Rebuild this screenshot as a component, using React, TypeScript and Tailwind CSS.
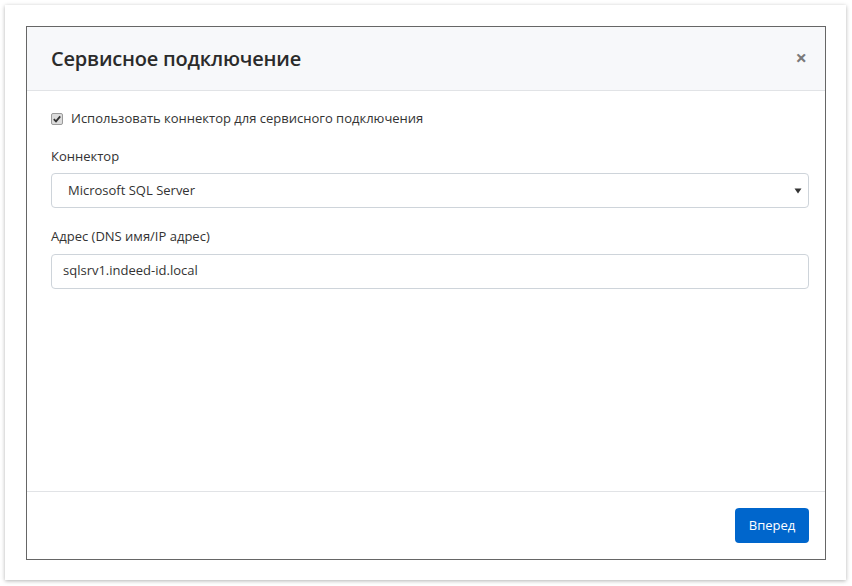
import React from 'react';

const font = { fontFamily: '"Open Sans", "Noto Sans", "Liberation Sans", sans-serif' };

export default function App() {
  return (
    <div className="w-[852px] h-[586px] bg-white pt-[5px] pl-[5px]" style={font}>
      <div className="w-[841px] h-[575px] bg-white shadow-[0_1px_4px_rgba(0,0,0,0.3)] pt-[21px] pl-[21px]">
        <div className="w-[800px] h-[534px] border border-[#666] flex flex-col text-[#212529]">
          <div className="h-[64px] bg-[#f7f8fa] border-b border-[#e1e3e6] flex items-center justify-between pl-[24px] pr-[18px]">
            <h1 className="text-[20px] font-semibold text-[#2b2b2b] tracking-[-0.2px]">Сервисное подключение</h1>
            <span className="text-[#7a7a7a] text-[20px] font-bold leading-none mt-[-2px]">×</span>
          </div>
          <div className="flex-1 pl-[24px] pr-[16px] pt-[18px]">
            <label className="flex items-center gap-[8px] text-[13px] text-[#333]">
              <span className="w-[12px] h-[12px] rounded-[2px] border border-[#9a9a9a] bg-[#dcdcdc] flex items-center justify-center">
                <svg width="10" height="10" viewBox="0 0 10 10">
                  <path d="M1.8 5.2 L4 7.4 L8.2 2.4" stroke="#333" strokeWidth="1.8" fill="none" />
                </svg>
              </span>
              Использовать коннектор для сервисного подключения
            </label>
            <div className="mt-[18px] text-[13px] text-[#333]">Коннектор</div>
            <div className="mt-[7px] h-[35px] border border-[#ced4da] rounded-[4px] flex items-center justify-between pl-[16px] pr-[6px] text-[13px] text-[#333]">
              <span>Microsoft SQL Server</span>
              <svg width="8" height="6" viewBox="0 0 8 6">
                <path d="M0.5 0.5 H7.5 L4 5.5 Z" fill="#333" />
              </svg>
            </div>
            <div className="mt-[19px] text-[13px] text-[#333]">Адрес (DNS имя/IP адрес)</div>
            <div className="mt-[7px] h-[35px] border border-[#ced4da] rounded-[4px] flex items-center pl-[11px] text-[13px] text-[#333]">
              sqlsrv1.indeed-id.local
            </div>
          </div>
          <div className="h-[68px] border-t border-[#e1e3e6] flex items-center justify-end pr-[16px]">
            <button className="h-[35px] w-[74px] rounded-[4px] bg-[#0066cc] text-white text-[13px] font-medium">Вперед</button>
          </div>
        </div>
      </div>
    </div>
  );
}
